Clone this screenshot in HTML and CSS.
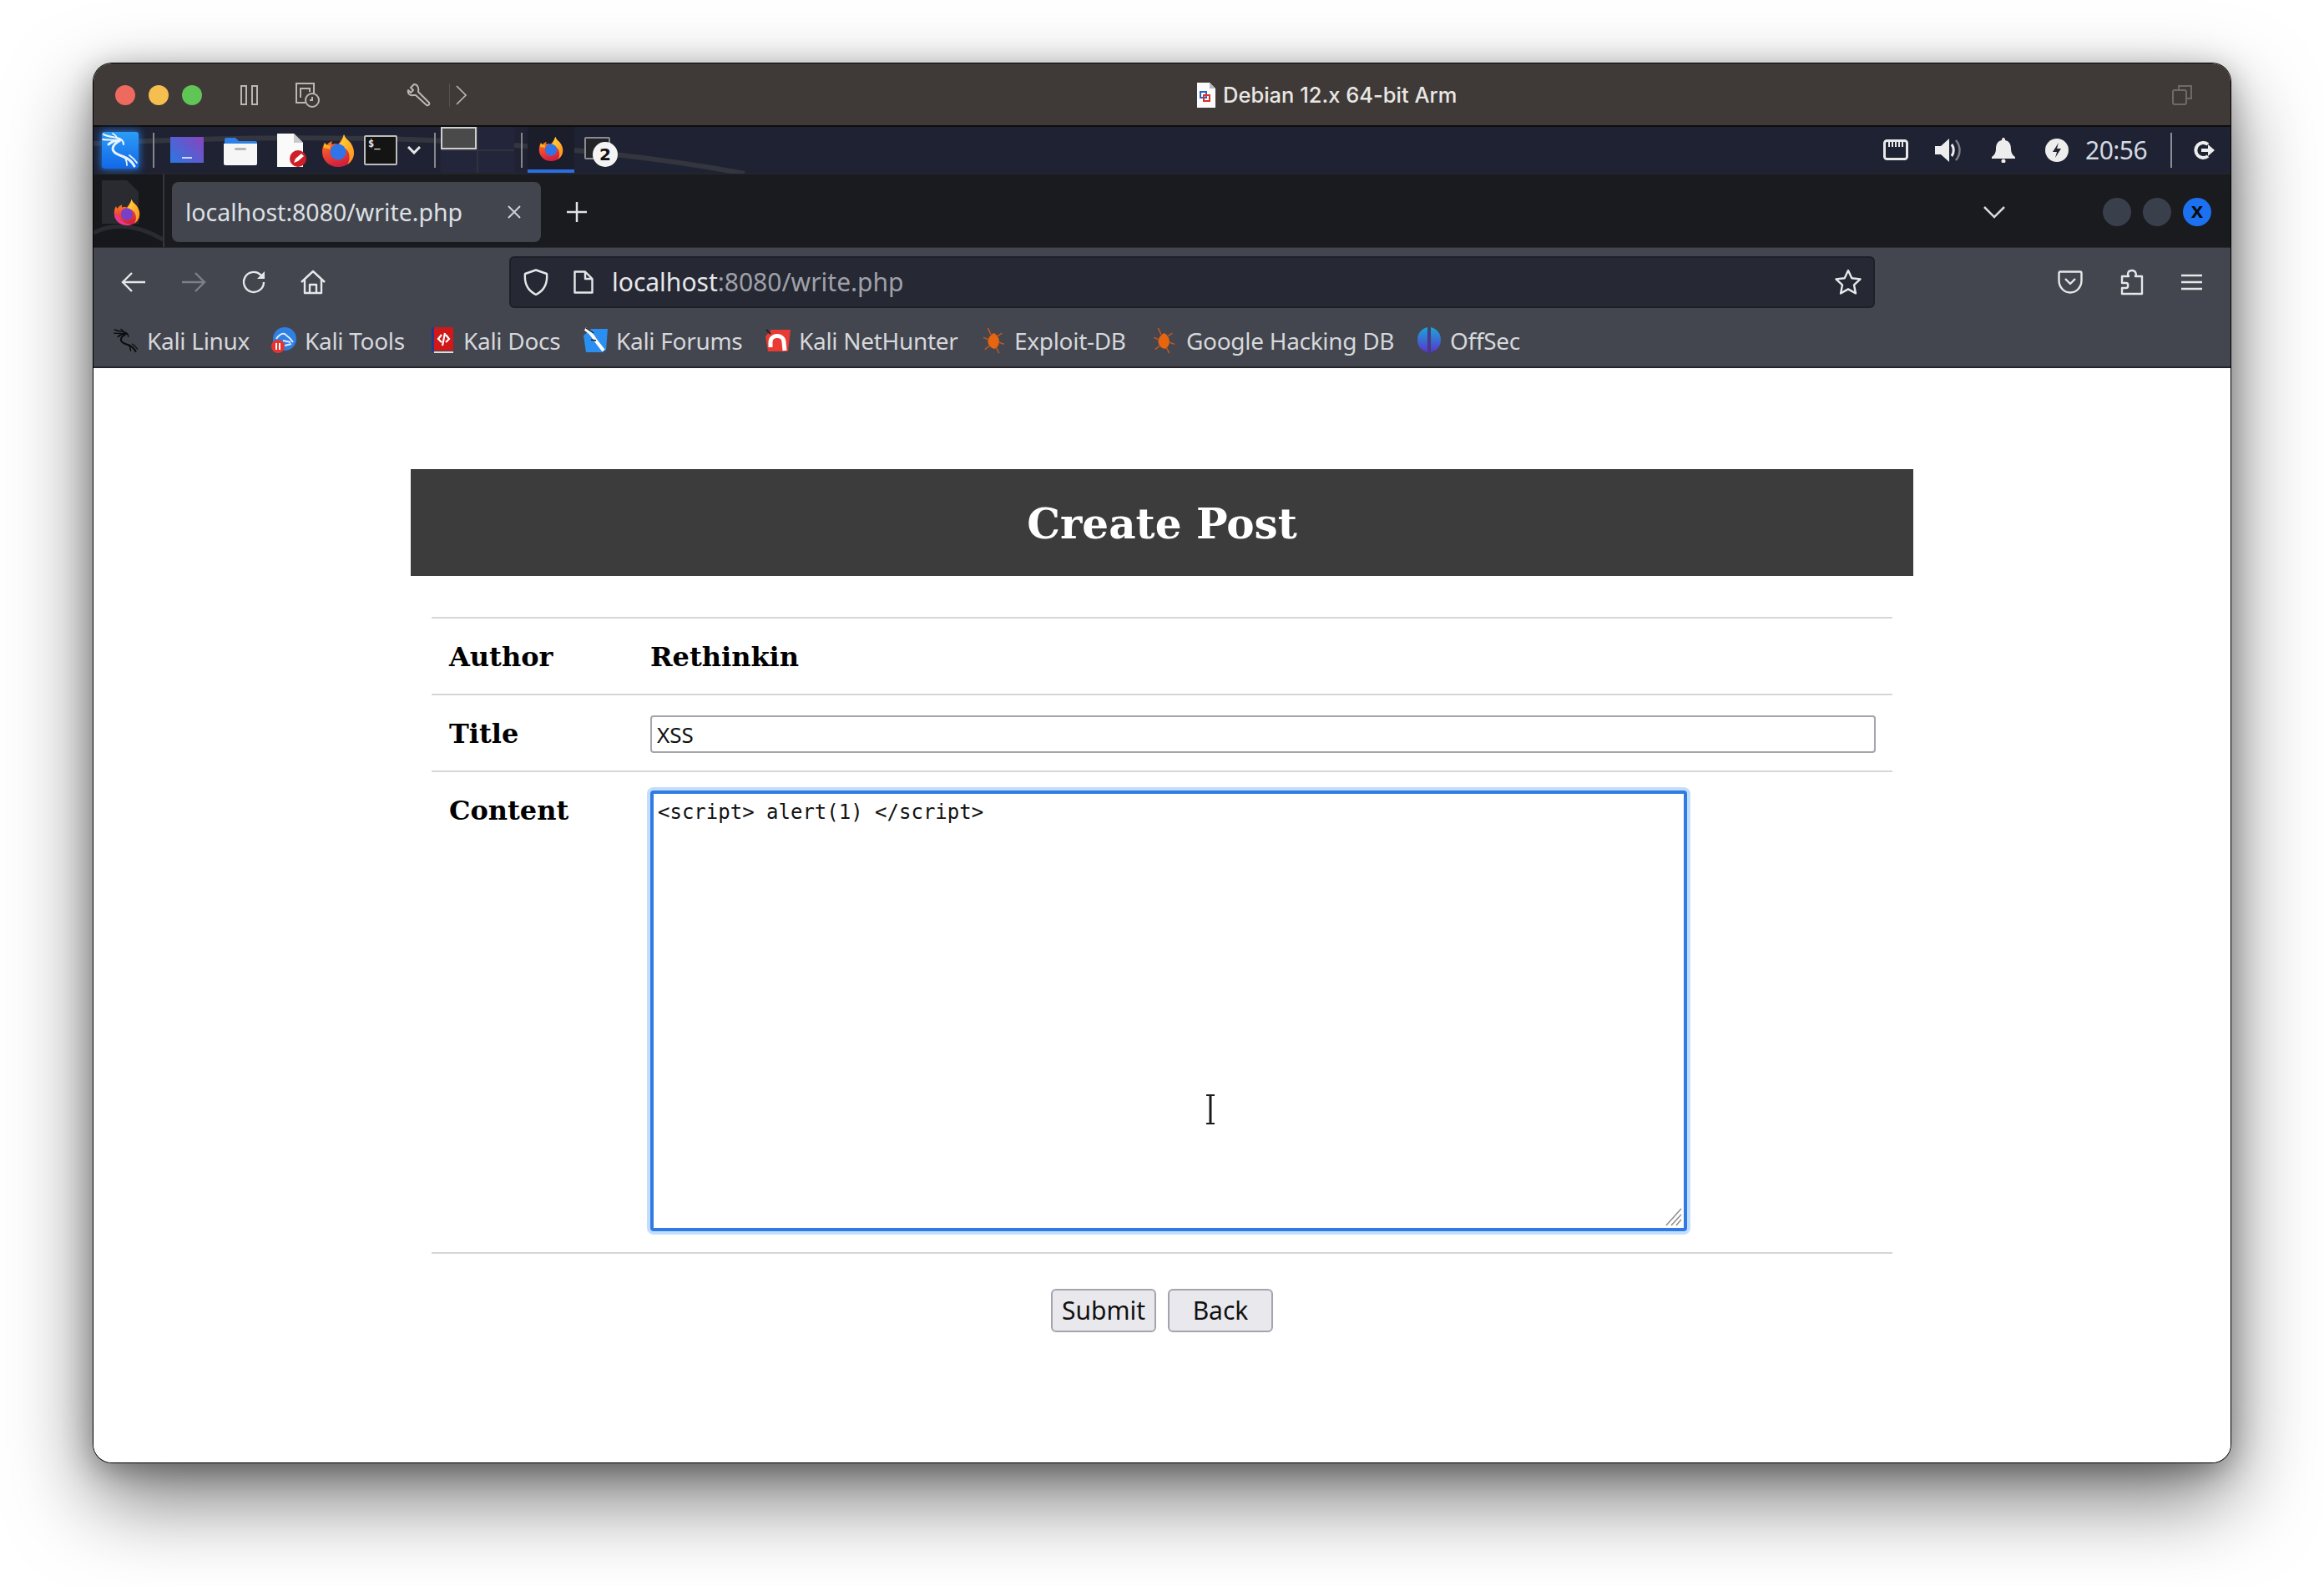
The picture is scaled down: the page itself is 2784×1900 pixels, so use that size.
FILE: index.html
```html
<!DOCTYPE html>
<html lang="en">
<head>
<meta charset="utf-8">
<title>Debian 12.x 64-bit Arm</title>
<link rel="stylesheet" href="styles.css">
</head>
<body>
<svg class="defs" width="0" height="0" aria-hidden="true">
  <defs>
    <linearGradient id="ffBody" x1="0" y1="0" x2="0.3" y2="1"><stop offset="0" stop-color="#ffb21e"/><stop offset=".5" stop-color="#f4512c"/><stop offset="1" stop-color="#d0223f"/></linearGradient>
    <linearGradient id="ffTop" x1="0" y1="0" x2="1" y2="1"><stop offset="0" stop-color="#ffde3a"/><stop offset="1" stop-color="#ff8a1c"/></linearGradient>
    <linearGradient id="offGrad" x1="0" y1="0" x2="0" y2="1"><stop offset="0" stop-color="#1aa6d8"/><stop offset="1" stop-color="#5a35d0"/></linearGradient>
    <symbol id="ff" viewBox="0 0 40 40">
      <path d="M27 1c1 4 4 6 7 9 4 5 5 10 5 13 0 10-8 17-19 17C9 40 1 32 1 22c0-4 1-8 3-11 0 2 1 3 2 4 1-3 4-5 7-6-1 2-1 3 0 4 2-1 5-1 7 0 3-4 6-8 7-12z" fill="url(#ffBody)"/>
      <path d="M27 1c1 4 4 6 7 9 4 5 5 10 5 13 0 6-3 11-8 14 3-4 3-9 2-13-1-5-7-9-13-9 3-4 6-8 7-14z" fill="url(#ffTop)"/>
      <circle cx="20" cy="22" r="9.5" fill="#2f74e8"/>
      <path d="M4 11c2 3 5 4 7 3-1 2-1 4 0 5-3-1-6-2-8-2 0-2 0-4 1-6z" fill="#ffb21e"/>
    </symbol>
    <symbol id="ffdev" viewBox="0 0 40 40">
      <path d="M27 1c1 4 4 6 7 9 4 5 5 10 5 13 0 10-8 17-19 17C9 40 1 32 1 22c0-4 1-8 3-11 0 2 1 3 2 4 1-3 4-5 7-6-1 2-1 3 0 4 2-1 5-1 7 0 3-4 6-8 7-12z" fill="url(#ffBody)"/>
      <path d="M27 1c1 4 4 6 7 9 4 5 5 10 5 13 0 6-3 11-8 14 3-4 3-9 2-13-1-5-7-9-13-9 3-4 6-8 7-14z" fill="url(#ffTop)"/>
      <circle cx="20" cy="23" r="9" fill="#7a3fc8"/>
      <path d="M1 22c0 10 8 18 19 18 3 0 6-1 8-2-9 1-17-4-20-12z" fill="#e8378f"/>
    </symbol>
    <symbol id="dragon" viewBox="0 0 44 44">
      <g fill="none" stroke="currentColor" stroke-linecap="round" stroke-linejoin="round">
        <path stroke-width="2.2" d="M2 3c6 3 12 3 16 4 5 1 8 4 8 8"/>
        <path stroke-width="1.8" d="M1 9c5 1 10 0 15 1M13 2c2 1 4 2 5 5"/>
        <path stroke-width="3" d="M8 15c4-3 9-6 14-5-5 3-9 6-9 10 0 4 5 7 11 9 6 2 12 6 15 12"/>
        <path stroke-width="1.8" d="M26 29c3 3 4 7 4 11M33 28c4 3 7 6 9 9"/>
      </g>
    </symbol>
    <symbol id="bug" viewBox="0 0 30 36">
      <path d="M15 8c4 2 8 7 7 13-1 5-4 8-7 8-4-1-7-4-8-9 0-5 4-10 8-12z" fill="#e8650f"/>
      <path d="M11 10 7 1M9 17 1 14M9 25 3 30M18 27l4 8M21 20l8 3M20 12l6-4" fill="none" stroke="#c65a16" stroke-width="1.6"/>
    </symbol>
  </defs>
</svg>

<div class="window">
  <header class="titlebar">
    <div class="tb-left">
      <span class="light red"></span><span class="light yellow"></span><span class="light green"></span>
      <svg class="ml46" width="21" height="24" viewBox="0 0 21 24" fill="none" stroke="#b9b6b3" stroke-width="2"><rect x="1" y="1" width="6" height="22"/><rect x="14" y="1" width="6" height="22"/></svg>
      <svg class="ml45" width="29" height="30" viewBox="0 0 29 30" fill="none" stroke="#b9b6b3" stroke-width="2"><path d="M12 24H1V1h21v12"/><path d="M6 18V7h11v4"/><circle cx="20" cy="21" r="8"/><path d="M20 17v4h-3"/></svg>
      <svg class="ml104" width="30" height="28" viewBox="0 0 30 28" fill="none" stroke="#b9b6b3" stroke-width="2" stroke-linejoin="round"><path d="M9 1 5 5l3 3-3 3-3-3c-1 4 2 7 6 6l3 0 13 12c2 1 4-1 3-3L14 10c1-5-1-9-5-9z"/></svg>
      <span class="tb-sep"></span>
      <svg class="ml7" width="13" height="24" viewBox="0 0 13 24" fill="none" stroke="#b9b6b3" stroke-width="1.6"><path d="m1 1 11 11L1 23"/></svg>
    </div>
    <svg width="22" height="30" viewBox="0 0 22 30"><path d="M0 0h15l7 7v23H0z" fill="#fbfbfb"/><path d="M15 0l7 7h-7z" fill="#b8b8b8"/><path d="M4 11h7v7H4z" fill="none" stroke="#2a62c8" stroke-width="2"/><path d="M8 15h7v7H8z" fill="none" stroke="#e0301e" stroke-width="2"/></svg>
    <h2 class="win-title">Debian 12.x 64-bit Arm</h2>
    <div class="tb-right">
      <svg width="24" height="24" viewBox="0 0 24 24" fill="none" stroke="#6e6a67" stroke-width="2"><rect x="1" y="6" width="16" height="17" rx="2"/><path d="M8 6V1h15v15h-6"/></svg>
    </div>
  </header>

  <div class="panel">
    <svg class="wave" width="900" height="56" viewBox="0 0 900 56" fill="none"><path d="M0 20C140 12 260 12 380 15 520 21 650 32 780 56" stroke="#33353f" stroke-width="6"/></svg>
    <span class="kali ml10"><svg width="44" height="44"><use href="#dragon"/></svg></span>
    <span class="vsep ml17"></span>
    <span class="win-ico ml19"><i></i></span>
    <svg class="ml24" width="40" height="36" viewBox="0 0 40 36"><path d="M1 5q0-2 2-2h11l4 4h20q2 0 2 2v4H1z" fill="#2e7fe6"/><path d="M0 10h40v24q0 2-2 2H2q-2 0-2-2z" fill="#f6f6f6"/><rect x="13" y="15" width="14" height="3" rx="1.5" fill="#b5b5b5"/></svg>
    <svg class="ml24" width="36" height="40" viewBox="0 0 36 40"><path d="M0 0h20l11 11v29H0z" fill="#fafafa"/><path d="M20 0l11 11H20z" fill="#c9c9c9"/><circle cx="25" cy="30" r="10" fill="#cf1f26"/><path d="m20 35 2-5 7-6 3 3-7 6z" fill="#fff"/></svg>
    <svg class="ml17" width="40" height="40"><use href="#ff"/></svg>
    <span class="term ml11"><b>$_</b></span>
    <svg class="ml12" width="16" height="10" viewBox="0 0 16 10" fill="none" stroke="#e8e8e8" stroke-width="3"><path d="m1 1 7 7 7-7"/></svg>
    <span class="vsep ml16"></span>
    <div class="pager ml6"><span class="cell cur"></span><span class="cell"></span><span class="cell"></span><span class="cell"></span></div>
    <span class="vsep ml8"></span>
    <div class="task ml6"><svg width="30" height="30"><use href="#ff"/></svg></div>
    <div class="term2 ml12"><span class="term mini"></span><span class="badge">2</span></div>
    <div class="tray">
      <svg width="30" height="26" viewBox="0 0 30 26" fill="none"><rect x="1.500" y="1.500" width="27" height="22" rx="3" stroke="#e8e8e8" stroke-width="3"/><path d="M7 3v6M11 3v6M15 3v6M19 3v6M23 3v6" stroke="#e8e8e8" stroke-width="2"/></svg>
      <svg class="ml32" width="34" height="30" viewBox="0 0 34 30"><path d="M0 10h7l10-9v28l-10-9H0z" fill="#ededed"/><path d="M20 8c3 4 3 10 0 14" fill="none" stroke="#ededed" stroke-width="3"/><path d="M25 3c6 7 6 17 0 24" fill="none" stroke="#7f8088" stroke-width="2.500"/></svg>
      <svg class="ml34" width="28" height="30" viewBox="0 0 28 30" fill="#ededed"><path d="M14 0c2 0 2 2 2 3 5 1 7 5 7 10 0 5 2 8 5 10v2H0v-2c3-2 5-5 5-10 0-5 2-9 7-10 0-1 0-3 2-3z"/><circle cx="14" cy="28" r="2.500"/></svg>
      <svg class="ml36" width="28" height="28" viewBox="0 0 28 28"><circle cx="14" cy="14" r="14" fill="#ededed"/><path d="m16 5-7 11h5l-2 7 7-11h-5z" fill="#20232f"/></svg>
      <span class="clock">20:56</span>
      <span class="vsep ml28"></span>
      <svg class="ml26" width="26" height="24" viewBox="0 0 26 24" fill="none"><path d="M17 5a9 9 0 1 0 0 14" stroke="#ededed" stroke-width="4"/><path d="M9 10h8V5l8 7-8 7v-5H9z" fill="#ededed"/></svg>
    </div>
  </div>

  <div class="tabbar">
    <div class="tab-side">
      <svg class="side-curve" width="83" height="88" viewBox="0 0 83 88" fill="none"><path d="M0 70C24 58 52 60 83 78" stroke="#2a2b30" stroke-width="5"/></svg>
      <svg class="side-doc" width="44" height="52" viewBox="0 0 44 52"><path d="M0 0h30l14 14v38H0z" fill="#2a2b30"/></svg>
      <svg class="side-ff" width="32" height="32"><use href="#ffdev"/></svg>
    </div>
    <div class="tab">
      <span class="tab-title">localhost:8080/write.php</span>
      <svg width="16" height="16" viewBox="0 0 16 16" stroke="#d0d2d6" stroke-width="2"><path d="m1 1 14 14M15 1 1 15"/></svg>
    </div>
    <svg class="plus" width="24" height="24" viewBox="0 0 24 24" stroke="#e2e3e6" stroke-width="2.500"><path d="M12 0v24M0 12h24"/></svg>
    <div class="tab-right">
      <svg width="26" height="15" viewBox="0 0 26 15" fill="none" stroke="#d8d9dc" stroke-width="2.500"><path d="m1 1 12 12L25 1"/></svg>
      <span class="wbtn ml117"></span>
      <span class="wbtn ml14"></span>
      <span class="wbtn close ml14">x</span>
    </div>
  </div>

  <nav class="navbar">
    <svg class="ml33" width="30" height="26" viewBox="0 0 30 26" fill="none" stroke="#e6e7e9" stroke-width="2.400"><path d="M29 13H2M13 2 2 13l11 11"/></svg>
    <svg class="ml42" width="30" height="26" viewBox="0 0 30 26" fill="none" stroke="#7e8087" stroke-width="2.400"><path d="M1 13h27M17 2l11 11-11 11"/></svg>
    <svg class="ml42" width="30" height="30" viewBox="0 0 30 30" fill="none" stroke="#e6e7e9" stroke-width="2.400"><path d="M27 15a12 12 0 1 1-4-9l4 4"/><path d="M28 2v9h-9" fill="#e6e7e9" stroke="none"/></svg>
    <svg class="ml41" width="30" height="30" viewBox="0 0 30 30" fill="none" stroke="#e6e7e9" stroke-width="2.400" stroke-linejoin="round"><path d="M1 15 15 2l14 13M5 12v16h20V12"/><path d="M11 28V18h8v10"/></svg>
    <div class="urlbar">
      <svg width="30" height="32" viewBox="0 0 30 32" fill="none" stroke="#e6e7e9" stroke-width="2.400" stroke-linejoin="round"><path d="M15 1.500 28 6c1 11-3 20-13 25C5 26 1 17 2 6z"/></svg>
      <svg class="ml30" width="24" height="28" viewBox="0 0 24 28" fill="none" stroke="#e6e7e9" stroke-width="2.400" stroke-linejoin="round"><path d="M3 1.500h11L22.500 10v16.500H1.500V1.500zM14 1.500V10h8.500"/></svg>
      <span class="url"><span class="url-host">localhost</span>:8080/write.php</span>
      <svg class="star" width="32" height="32" viewBox="0 0 32 32" fill="none" stroke="#e6e7e9" stroke-width="2.400" stroke-linejoin="round"><path d="m16 2 4.300 9.200 10.200 1.200-7.500 7 2 10L16 24.400l-9 5 2-10-7.500-7 10.200-1.200z"/></svg>
    </div>
    <svg class="ml219" width="30" height="28" viewBox="0 0 30 28" fill="none" stroke="#e6e7e9" stroke-width="2.400" stroke-linejoin="round"><path d="M3 1.500h24q1.500 0 1.500 2V12a13.500 14.500 0 0 1-27 0V3.500q0-2 1.500-2z"/><path d="m9 10 6 6 6-6"/></svg>
    <svg class="ml45" width="28" height="32" viewBox="0 0 28 32" fill="none" stroke="#e6e7e9" stroke-width="2.400" stroke-linejoin="round"><path d="M2 9h8c-2-3-1-7 4-7 4 0 6 4 4 7h8v21H2v-7h5c3 0 3-6 0-6H2z"/></svg>
    <svg class="ml45" width="25" height="20" viewBox="0 0 25 20" stroke="#e6e7e9" stroke-width="2.400"><path d="M0 2h25M0 10h25M0 18h25"/></svg>
  </nav>

  <div class="bookmarks">
    <a class="bm"><svg class="dk" width="30" height="32" viewBox="0 0 44 44"><use href="#dragon"/></svg><span class="bm-t bm-w1">Kali Linux</span></a>
    <a class="bm"><svg width="30" height="32" viewBox="0 0 30 32"><circle cx="16" cy="14" r="14" fill="#2f80e2"/><path d="M6 14c4-6 7-7 10-6 4 3 7 5 10 10M14 16l9 2M16 22l8-2" fill="none" stroke="#dcecff" stroke-width="2"/><circle cx="8" cy="23" r="8" fill="#e8322d"/><path d="M6 19v8M10 19v8" stroke="#fff" stroke-width="2"/></svg><span class="bm-t bm-w2">Kali Tools</span></a>
    <a class="bm"><svg width="26" height="32" viewBox="0 0 26 32"><path d="M0 0h3v30H0z" fill="#223a88"/><path d="M3 0h23v28H3z" fill="#d01818"/><path d="M3 29h23v2H3z" fill="#ddd"/><path d="M12 9l-4 5 4 4M17 9l4 5-4 4M16 7l-3 15" fill="none" stroke="#fff" stroke-width="2.200"/></svg><span class="bm-t bm-w3">Kali Docs</span></a>
    <a class="bm"><svg width="32" height="32" viewBox="0 0 32 32"><path d="M10 2h20l-2 25-4 3H4L1 10z" fill="#2a8ff0"/><path d="M3 2c5 3 9 8 12 13l10 13" fill="none" stroke="#fff" stroke-width="4"/><path d="M4 1l9 6M16 16l-6-1" fill="none" stroke="#1c1c1c" stroke-width="1.500"/></svg><span class="bm-t bm-w4">Kali Forums</span></a>
    <a class="bm"><svg width="31" height="32" viewBox="0 0 31 32"><path d="M8 3h23l-3 26H4L1 11z" fill="#ea3a34"/><path d="M7 24v-6c0-10 16-10 16 0l1 10" fill="none" stroke="#fff" stroke-width="5"/><path d="M2 3l5 5" stroke="#222" stroke-width="2"/></svg><span class="bm-t bm-w5">Kali NetHunter</span></a>
    <a class="bm"><svg width="29" height="32"><use href="#bug"/></svg><span class="bm-t bm-w6">Exploit-DB</span></a>
    <a class="bm"><svg width="29" height="32"><use href="#bug"/></svg><span class="bm-t bm-w7">Google Hacking DB</span></a>
    <a class="bm"><svg width="30" height="34" viewBox="0 0 30 34"><path d="M13 1C5 3 1 9 1 16s4 13 12 15zM17 1c8 2 12 8 12 15s-4 13-12 15z" fill="url(#offGrad)"/><path d="M15 4v29" stroke="#4a2fc8" stroke-width="1.500"/></svg><span class="bm-t">OffSec</span></a>
  </div>

  <main class="page">
    <h1 class="page-title">Create Post</h1>
    <form class="post-form">
      <div class="row">
        <div class="label">Author</div>
        <div class="value">Rethinkin</div>
      </div>
      <div class="row">
        <div class="label">Title</div>
        <div class="value field"><input class="title-input" type="text" value="XSS"></div>
      </div>
      <div class="row row-last">
        <div class="label">Content</div>
        <div class="value field area-cell">
          <div class="area-wrap">
            <textarea class="content-area">&lt;script&gt; alert(1) &lt;/script&gt;</textarea>
            <svg class="grip" width="20" height="22" viewBox="0 0 20 22" stroke="#8d8d8d" stroke-width="1.500"><path d="M1 21 19 1M7 21 19 8M13 21l6-7"/></svg>
            <svg class="ibeam" width="14" height="38" viewBox="0 0 14 38" fill="none" stroke="#1c1c1c" stroke-width="2"><path d="M2 2h10M2 36h10"/><path d="M7 2v34" stroke-width="3"/></svg>
          </div>
        </div>
      </div>
      <div class="buttons">
        <button class="btn" type="button">Submit</button>
        <button class="btn" type="button">Back</button>
      </div>
    </form>
  </main>
</div>
</body>
</html>
```

FILE: styles.css
```css
* { box-sizing: border-box; }
html, body { margin: 0; height: 100%; }
body {
  width: 2784px;
  height: 1900px;
  padding: 76px 112px 0;
  background: #fff;
  overflow: hidden;
  font-family: "Noto Sans", sans-serif;
}
.defs { position: absolute; }
svg { display: block; flex: none; }

.ml6 { margin-left: 6px; } .ml7 { margin-left: 7px; } .ml8 { margin-left: 8px; }
.ml10 { margin-left: 10px; } .ml11 { margin-left: 11px; } .ml12 { margin-left: 12px; }
.ml14 { margin-left: 14px; } .ml16 { margin-left: 16px; } .ml17 { margin-left: 17px; }
.ml19 { margin-left: 19px; } .ml24 { margin-left: 24px; } .ml26 { margin-left: 26px; }
.ml28 { margin-left: 28px; } .ml30 { margin-left: 30px; }
.ml32 { margin-left: 32px; } .ml33 { margin-left: 33px; } .ml34 { margin-left: 34px; }
.ml36 { margin-left: 36px; } .ml41 { margin-left: 41px; } .ml42 { margin-left: 42px; }
.ml45 { margin-left: 45px; } .ml46 { margin-left: 46px; } .ml104 { margin-left: 104px; }
.ml117 { margin-left: 117px; } .ml219 { margin-left: 219px; }

.window {
  width: 2560px;
  height: 1676px;
  border-radius: 22px;
  overflow: hidden;
  background: #fff;
  box-shadow: 0 0 0 1px #000, 0 42px 100px rgba(0,0,0,.55), 0 8px 36px rgba(0,0,0,.32);
}

/* Host window title bar */
.titlebar {
  height: 76px;
  display: flex;
  align-items: center;
  background: #3f3a37;
  box-shadow: inset 0 -2px 0 #0d0d0d;
}
.tb-left { flex: 0 0 1322px; display: flex; align-items: center; padding-left: 26px; }
.light { width: 24px; height: 24px; border-radius: 50%; margin-right: 16px; }
.light.green { margin-right: 0; }
.red { background: #ee6a5e; }
.yellow { background: #f5bf4f; }
.green { background: #61c555; }
.tb-sep { width: 1px; height: 28px; background: #56524f; margin-left: 21px; }
.win-title {
  margin: 0 0 0 9px;
  font: 500 25.5px/1 "Inter", "Liberation Sans", sans-serif;
  color: #e9e7e5;
}
.tb-right { flex: 1; display: flex; justify-content: flex-end; padding-right: 46px; }

/* Guest desktop panel */
.panel {
  position: relative;
  height: 57px;
  display: flex;
  align-items: center;
  background: #1f2232;
  border-bottom: 2px solid #23252c;
}
.wave { position: absolute; left: 0; top: 0; }
.panel > *:not(.wave) { position: relative; }
.kali {
  width: 44px;
  height: 44px;
  border-radius: 3px;
  background: linear-gradient(#2b9cf7, #1268e8);
  box-shadow: 0 0 8px 2px rgba(38,130,245,.7);
  color: #e9f3ff;
}
.vsep { width: 2px; height: 42px; background: #85878c; flex: none; }
.win-ico {
  width: 40px;
  height: 31px;
  background: linear-gradient(45deg, #2a78e4, #8a43bd);
  display: flex;
  justify-content: center;
  align-items: flex-end;
  padding-bottom: 5px;
}
.win-ico i { width: 12px; height: 2px; background: #cfd9f2; }
.term {
  width: 40px;
  height: 36px;
  border: 2px solid #bdbdbd;
  border-radius: 2px;
  background: #141414;
  color: #e8e8e8;
  padding: 1px 0 0 3px;
}
.term b { font: 700 12px/14px "DejaVu Sans Mono", monospace; display: block; }
.pager {
  width: 88px;
  height: 55px;
  align-self: flex-start;
  display: grid;
  grid-template-columns: 1fr 1fr;
  grid-template-rows: 1fr 1fr;
  gap: 2px;
  background: #30323e;
}
.cell { background: #23263a; }
.cell.cur { background: #4a4a4a; border: 2px solid #cfcfcf; }
.task {
  width: 56px;
  height: 55px;
  align-self: flex-start;
  background: #1b1d2b;
  border-bottom: 4px solid #2a6fe0;
  display: flex;
  justify-content: center;
  padding-top: 11px;
}
.term2 { width: 40px; height: 44px; }
.term.mini {
  position: absolute; left: 0; top: 6px;
  width: 31px; height: 27px;
  border: 2px solid #8b8c90;
  background: #232428;
}
.badge {
  position: absolute; left: 10px; top: 12px;
  width: 30px; height: 30px;
  border-radius: 50%;
  background: #f4f4f4;
  color: #111;
  font: 700 20px/30px "DejaVu Sans", sans-serif;
  text-align: center;
}
.tray { margin-left: auto; display: flex; align-items: center; padding-right: 18px; }
.clock {
  margin-left: 20px;
  width: 74px;
  font-size: 30px;
  line-height: 1;
  letter-spacing: -.5px;
  white-space: nowrap;
  color: #d3d9e2;
}
.tray .vsep { width: 2px; background: #8c8e95; }

/* Browser tab strip */
.tabbar {
  height: 88px;
  display: flex;
  align-items: flex-start;
  background: #1a1b1f;
  border-bottom: 1px solid #2a2b30;
}
.tab-side {
  position: relative;
  width: 85px;
  height: 87px;
  flex: none;
  border-right: 2px solid #34363c;
  background: #17181c;
  overflow: hidden;
}
.side-curve { position: absolute; left: 0; top: 0; }
.side-doc { position: absolute; left: 10px; top: 7px; }
.side-ff { position: absolute; left: 24px; top: 29px; }
.tab {
  margin: 9px 0 0 9px;
  width: 442px;
  height: 72px;
  border-radius: 8px;
  background: #42454e;
  display: flex;
  align-items: center;
  justify-content: space-between;
  padding: 0 24px 0 16px;
}
.tab-title { font-size: 28.5px; color: #dde0e4; line-height: 1; white-space: nowrap; }
.plus { margin: 33px 0 0 31px; }
.tab-right { margin-left: auto; margin-top: 28px; display: flex; align-items: center; padding-right: 23px; }
.wbtn {
  width: 34px; height: 34px; border-radius: 50%;
  background: #3a3f4c;
  flex: none;
}
.wbtn.close {
  background: #1c71f0;
  color: #0b0b0b;
  font: 700 26px/30px "Liberation Sans", sans-serif;
  text-align: center;
}

/* Navigation toolbar */
.navbar {
  height: 82px;
  display: flex;
  align-items: center;
  background: #43464f;
}
.urlbar {
  margin-left: 220px;
  width: 1636px;
  height: 62px;
  border-radius: 6px;
  background: #262834;
  border: 2px solid #1e1f27;
  display: flex;
  align-items: center;
  padding: 0 14px 0 15px;
}
.url { margin-left: 22px; font-size: 30px; line-height: 1; color: #9fa1a8; white-space: nowrap; }
.url-host { color: #e6e7e9; }
.star { margin-left: auto; }

/* Bookmarks toolbar */
.bookmarks {
  height: 62px;
  display: flex;
  align-items: center;
  background: #43464f;
  border-bottom: 2px solid #24252a;
  padding: 0 0 2px 24px;
}
.bm { display: flex; align-items: center; color: #d6d7da; }
.bm-t {
  margin-left: 10px;
  font-size: 28px;
  letter-spacing: -.3px;
  line-height: 1;
  white-space: nowrap;
}
.bm-w1 { width: 149px; }
.bm-w2 { width: 152px; }
.bm-w3 { width: 143px; margin-left: 12px; }
.bm-w4 { width: 178px; margin-left: 8px; }
.bm-w5 { width: 219px; }
.bm-w6 { width: 165px; }
.bm-w7 { width: 276px; margin-left: 12px; }
.dk { color: #0d0d0d; }

/* Web page */
.page { height: 1311px; padding: 121px 380px 0; background: #fff; }
.page-title {
  margin: 0;
  height: 128px;
  padding-top: 4px;
  background: #3c3c3c;
  color: #fff;
  font: 700 50px/124px "DejaVu Serif", serif;
  text-align: center;
}
.post-form { margin: 49px 25px 0; font: 700 32px/48px "DejaVu Serif", serif; color: #000; }
.row {
  display: grid;
  grid-template-columns: 240px 1fr;
  column-gap: 2px;
  border-top: 2px solid #d6d6d6;
}
.label { padding: 22px 21px 0; height: 90px; }
.value { padding: 22px 20px 0; }
.field { padding: 24px 20px 0; height: 90px; }
.area-cell { height: 575px; padding-top: 22px; }
.title-input {
  display: block;
  width: 100%;
  height: 45px;
  border: 2px solid #a5a5ad;
  border-radius: 4px;
  padding: 0 6px;
  font: 400 26px/41px "Noto Sans", sans-serif;
  color: #111;
  outline: none;
}
.area-wrap { position: relative; width: 1242px; height: 528px; }
.content-area {
  display: block;
  width: 100%;
  height: 100%;
  border: 4px solid #2f7be2;
  border-radius: 4px;
  box-shadow: 0 0 0 4px #c2deff;
  padding: 6px 5px;
  resize: none;
  outline: none;
  font: 400 24px/32px "DejaVu Sans Mono", monospace;
  color: #111;
}
.grip { position: absolute; right: 6px; bottom: 6px; }
.ibeam { position: absolute; left: 664px; top: 363px; }
.row-last { border-bottom: 2px solid #d6d6d6; }
.buttons { display: flex; justify-content: center; gap: 14px; margin-top: 42px; }
.btn {
  width: 126px;
  height: 52px;
  padding: 0;
  border: 2px solid #a4a4ae;
  border-radius: 6px;
  background: #e9e9ed;
  color: #111;
  font: 400 30px/1 "Noto Sans", sans-serif;
}
```
